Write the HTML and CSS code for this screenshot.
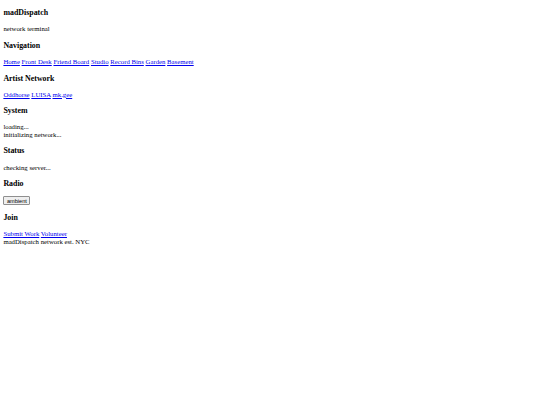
FILE: index.html
```html
<!DOCTYPE html>
<html>
<head>
<meta charset="utf-8">
<title>madDispatch</title>
<link rel="stylesheet" href="styles.css">
</head>
<body class="page">
  <header class="block">
    <h3 class="sec-title first">madDispatch</h3>
    <p class="text">network terminal</p>
  </header>
  <nav class="block">
    <h3 class="sec-title">Navigation</h3>
    <p class="text"><a class="lnk" href="#">Home</a> <a class="lnk" href="#">Front Desk</a> <a class="lnk" href="#">Friend Board</a> <a class="lnk" href="#">Studio</a> <a class="lnk" href="#">Record Bins</a> <a class="lnk" href="#">Garden</a> <a class="lnk" href="#">Basement</a></p>
  </nav>
  <section class="block">
    <h3 class="sec-title">Artist Network</h3>
    <p class="text"><a class="lnk" href="#">Oddhorse</a> <a class="lnk" href="#">LUISA</a> <a class="lnk" href="#">mk.gee</a></p>
  </section>
  <section class="block">
    <h3 class="sec-title">System</h3>
    <div class="text">
      <div class="line">loading...</div>
      <div class="line">initializing network...</div>
    </div>
  </section>
  <section class="block">
    <h3 class="sec-title">Status</h3>
    <p class="text">checking server...</p>
  </section>
  <section class="block">
    <h3 class="sec-title">Radio</h3>
    <p class="text"><button class="btn" type="button">ambient</button></p>
  </section>
  <section class="block">
    <h3 class="sec-title">Join</h3>
    <div class="text">
      <div class="line"><a class="lnk" href="#">Submit Work</a> <a class="lnk" href="#">Volunteer</a></div>
      <footer class="line">madDispatch network est. NYC</footer>
    </div>
  </section>
</body>
</html>
```
FILE: styles.css
```css
html { background: #ffffff; }
.page {
  margin: 3.375px;
  font-family: "Liberation Serif", "Times New Roman", serif;
  font-size: 6.75px;
  line-height: 7.594px;
  color: #000000;
}
.sec-title {
  font-size: 7.9px;
  line-height: 9.28px;
  font-weight: bold;
  margin: 7.9px 0;
}
.sec-title.first {
  margin-top: 4.9px;
}
.text {
  margin: 6.75px 0;
}
.line {
  display: block;
}
.lnk {
  color: #0000ee;
  text-decoration: underline;
}
.btn {
  font-family: "Liberation Sans", Arial, sans-serif;
  font-size: 5.625px;
  line-height: 6.33px;
  color: #000000;
  background: #efefef;
  border: 1px solid #8f8f8f;
  border-radius: 1px;
  padding: 0.26px 2.53px;
  margin: 0;
  vertical-align: baseline;
}
```
